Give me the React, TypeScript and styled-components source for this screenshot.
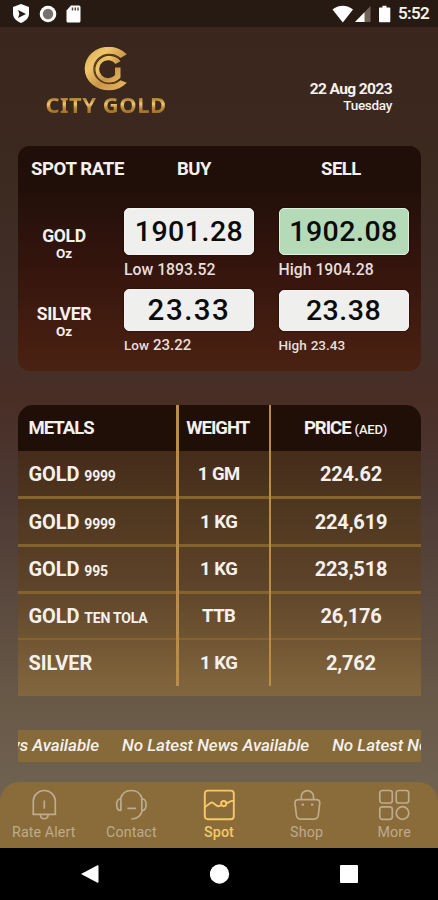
import React from "react";
import styled, { createGlobalStyle } from "styled-components";

const GlobalStyle = createGlobalStyle`
  *, *::before, *::after { box-sizing: border-box; }
  body { margin: 0; background: #3a261d; font-family: Roboto, "Liberation Sans", sans-serif; }
`;

const Screen = styled.main`
  width: 438px;
  height: 900px;
  overflow: hidden;
  display: flex;
  flex-direction: column;
  color: #f4f1ed;
  background: linear-gradient(180deg, #3a261d 0, #3b281e 150px, #43302a 330px, #492e26 400px, #4d3a34 500px, #5a493e 600px, #685947 700px, #706250 790px);
`;

const StatusBar = styled.header`
  flex: none;
  height: 27px;
  padding: 0 9px 0 12px;
  display: flex;
  align-items: center;
  justify-content: space-between;
  background: #271a13;
`;

const StatusGroup = styled.div<{ $gap: number }>`
  display: flex;
  align-items: center;
  gap: ${(p) => p.$gap}px;
`;

const Type = styled.span<{ $size: number; $weight?: number; $track?: number; $italic?: boolean }>`
  font-size: ${(p) => p.$size}px;
  font-weight: ${(p) => p.$weight ?? 700};
  letter-spacing: ${(p) => p.$track ?? 0}px;
  font-style: ${(p) => (p.$italic ? "italic" : "normal")};
  line-height: 1.17;
  white-space: pre;
`;

const BrandBar = styled.section`
  flex: none;
  height: 119px;
  padding: 20px 46px 0 45px;
  display: flex;
  justify-content: space-between;
`;

const Brand = styled.div`
  width: 122px;
  display: flex;
  flex-direction: column;
  align-items: center;
`;

const BrandName = styled.div`
  margin-top: -2px;
  font: 700 22px/26px "Noto Sans", sans-serif;
  letter-spacing: 0.5px;
  white-space: nowrap;
  color: transparent;
  background: linear-gradient(180deg, #9c6c26 5px, #c2913f 9px, #edc878 13px, #bd8a38 17px, #a06f26 22px);
  background-clip: text;
  -webkit-background-clip: text;
`;

const DateBlock = styled.div`
  padding-top: 33px;
  display: flex;
  flex-direction: column;
  align-items: flex-end;
`;

const SpotCard = styled.section`
  flex: none;
  height: 225px;
  margin: 0 17px 0 18px;
  border-radius: 12px;
  overflow: hidden;
  background: linear-gradient(180deg, #230f09 46px, #2a120c 75px, #35150d 125px, #421c10 180px, #4a2212 225px);
`;

const SpotHead = styled.div`
  height: 46px;
  padding: 1px 0 0 13px;
  display: grid;
  grid-template-columns: 146px 144px 1fr;
  align-items: center;
  background: #200f08;
`;

const SpotRow = styled.div`
  display: flex;
`;

const SpotLabel = styled.div<{ $top: number }>`
  flex: none;
  width: 92px;
  margin-right: 14px;
  padding-top: ${(p) => p.$top}px;
  display: flex;
  flex-direction: column;
  align-items: center;
`;

const Quote = styled.div<{ $top: number }>`
  flex: none;
  width: 130px;
  margin-right: 24.5px;
  padding-top: ${(p) => p.$top}px;
`;

const Tile = styled.div<{ $h: number; $up?: boolean }>`
  height: ${(p) => p.$h}px;
  display: flex;
  align-items: center;
  justify-content: center;
  border-radius: 5px;
  border: 1.5px solid ${(p) => (p.$up ? "#dcefdc" : "#f3f3f2")};
  background: ${(p) => (p.$up ? "#b5dab8" : "#efefee")};
  box-shadow: 0 0 2px #160503;
  color: #0b0b0b;
`;

const Range = styled.div`
  height: 30px;
  display: flex;
  align-items: center;
  gap: 4px;
  color: #e7dfda;
`;

const RateTable = styled.section`
  flex: none;
  position: relative;
  height: 291px;
  margin: 34px 17px 0 18px;
  border-radius: 15px 15px 0 0;
  overflow: hidden;
  background: linear-gradient(180deg, #452c1b 46px, #513820 110px, #5c4229 175px, #6d5231 225px, #7d613b 270px, #82663e 291px);
`;

const RateRow = styled.div<{ $height: number; $head?: boolean; $line?: number }>`
  height: ${(p) => p.$height}px;
  padding-top: ${(p) => (p.$head ? 1 : 2)}px;
  display: grid;
  grid-template-columns: 159.5px 92.5px 1fr;
  align-items: center;
  background: ${(p) => (p.$head ? "#200f07" : "transparent")};
  border-bottom: ${(p) => (p.$line ? `${p.$line}px solid #83642f` : "none")};
`;

const MetalCell = styled.div`
  padding-left: 10.5px;
  display: flex;
  align-items: baseline;
  gap: 5px;
`;

const WeightCell = styled.div<{ $shift: number }>`
  display: flex;
  justify-content: center;
  padding-right: ${(p) => p.$shift}px;
`;

const PriceCell = styled.div<{ $shift: number }>`
  display: flex;
  align-items: baseline;
  justify-content: center;
  gap: 4px;
  padding-left: ${(p) => p.$shift}px;
`;

const ColumnRule = styled.i<{ $x: number }>`
  position: absolute;
  left: ${(p) => p.$x}px;
  top: 0;
  height: 281px;
  width: 2.4px;
  background: #b98d48;
`;

const News = styled.section`
  flex: none;
  height: 32px;
  margin: 34px 17px 0 18px;
  overflow: hidden;
  display: flex;
  align-items: center;
  background: #866a3a;
`;

const NewsTrack = styled.div`
  display: flex;
  gap: 23px;
  margin-left: -106px;
`;

const TabBar = styled.nav`
  flex: none;
  height: 66px;
  margin-top: 20px;
  display: grid;
  grid-template-columns: repeat(5, 1fr);
  border-radius: 20px 20px 0 0;
  background: #8a6c3a;
`;

const Tab = styled.div<{ $active?: boolean }>`
  display: flex;
  flex-direction: column;
  align-items: center;
  padding-top: 6px;
  gap: 2px;
  color: ${(p) => (p.$active ? "#f5c868" : "#beaa8d")};
`;

const SystemBar = styled.footer`
  flex: 1;
  display: grid;
  grid-template-columns: 22px 20px 20px;
  column-gap: 109px;
  align-items: center;
  padding-left: 79px;
  background: #000;
`;

const GoldEmblem = () => (
  <svg width="46" height="46" viewBox="0 0 46 46" fill="none">
    <defs>
      <linearGradient id="gold" x1="0" y1="0" x2="1" y2="1">
        <stop offset="0" stopColor="#d9a94e" />
        <stop offset=".3" stopColor="#efc56c" />
        <stop offset=".6" stopColor="#c99546" />
        <stop offset="1" stopColor="#e8bb60" />
      </linearGradient>
    </defs>
    <path d="M43.800 7.300A24 21.800 0 1 0 43.800 35.800L37.500 33.200A15.500 15 0 1 1 37.500 11Z" fill="url(#gold)" />
    <path d="M37.500 14.200A14 13.500 0 1 0 37.500 30.500V20.500H32V28A9 9 0 1 1 32.500 17Z" fill="url(#gold)" />
    <path d="M36.500 11.600A15 14.500 0 1 0 36 32.800" stroke="#5a3b1c" strokeWidth="1.400" />
  </svg>
);

const ShieldIcon = () => (
  <svg width="18" height="20" viewBox="0 0 18 20">
    <path d="M9 0 17 3v6.500c0 4.300-3.300 7.700-8 9.500-4.700-1.800-8-5.200-8-9.500V3Z" fill="#fff" />
    <path d="m6 6 8 4-8 4 1.400-4Z" fill="#271a13" />
  </svg>
);

const RecordIcon = () => (
  <svg width="18" height="18" viewBox="0 0 18 18">
    <circle cx="9" cy="9" r="8.300" fill="#fff" />
    <circle cx="9" cy="9" r="5.200" fill="#77716d" />
  </svg>
);

const CardIcon = () => (
  <svg width="15" height="18" viewBox="0 0 15 18">
    <path d="M5 .5h8a1.500 1.500 0 0 1 1.500 1.500v14A1.500 1.500 0 0 1 13 17.500H2A1.500 1.500 0 0 1 .5 16V5.500Z" fill="#fff" />
    <path d="M6.500 2.500v3M9.300 2.500v3M12 2.500v3" stroke="#54483f" strokeWidth="1.500" />
  </svg>
);

const StatusIcons = () => (
  <svg width="60" height="18" viewBox="0 0 60 18">
    <path d="M1.500 4.500C7-.6 16.500-.6 22 4.500L11.800 17.500Z" fill="#fff" />
    <path d="M39.500 1v16H24Z" fill="#726257" />
    <path d="M33.500 7.200V17H24Z" fill="#fff" />
    <path d="M51.500.8h4v1.700h3q.8 0 .8.8v13q0 .9-.9.9h-9.500q-.9 0-.9-.9v-13q0-.8.8-.8h2.700Z" fill="#fff" />
  </svg>
);

const tabIcon = {
  width: 34,
  height: 34,
  viewBox: "0 0 34 34",
  fill: "none",
  stroke: "currentColor",
  strokeWidth: 1.7,
  strokeLinecap: "round" as const,
  strokeLinejoin: "round" as const,
};

const BellIcon = () => (
  <svg {...tabIcon}>
    <path d="M6 26.300h22.600M6.300 26V13.300a11 10.800 0 0 1 22 0V26M13.500 27c.2 5 7.400 5 7.600 0M17.300 13v7" />
  </svg>
);

const HeadsetIcon = () => (
  <svg {...tabIcon}>
    <path d="M6.700 10.500C8 5.500 12 2.500 17.300 2.500S26.600 5.500 28 10.500M28.200 22.500c-.7 4.500-4.500 8.300-10.200 8.500M14 20.300h7.300M6.900 11v11.300h-1C1.600 22 1.600 11.500 5.900 11ZM27.800 11v11.300h1c4.300-.3 4.300-10.800 0-11.300Z" />
  </svg>
);

const ChartIcon = () => (
  <svg {...tabIcon} strokeWidth={1.9}>
    <rect x="2.800" y="2.600" width="29" height="28.600" rx="3" />
    <path d="M3 19 8.500 15Q10 14 11.500 15.200L14.500 17.600Q16.500 19.200 19.500 17M24.300 14.800h2q2-2.300 5.300-1.800" />
    <circle cx="21.700" cy="15.600" r="2.600" />
  </svg>
);

const BagIcon = () => (
  <svg {...tabIcon}>
    <path d="M8.500 11.600h17.700q4 0 3.500 4L28.300 27.200q-.6 4-4.600 4H11q-4 0-4.600-4L5 15.600q-.5-4 3.500-4ZM11.300 11.200V8.700a6.100 6.100 0 0 1 12.200 0v2.500" />
    <path d="M12.500 16.700h.6M21.900 16.700h.6" strokeWidth="2.200" />
  </svg>
);

const GridIcon = () => (
  <svg {...tabIcon}>
    <rect x="2.800" y="2.500" width="12.500" height="12.500" rx="2.500" />
    <rect x="19.200" y="2.500" width="12.500" height="12.500" rx="2.500" />
    <rect x="2.800" y="18.800" width="12.500" height="12.500" rx="2.500" />
    <circle cx="25.500" cy="25" r="6.300" />
  </svg>
);

type Rate = { metal: string; note?: string; weight: string; price: string; height: number; line?: number };

const rates: Rate[] = [
  { metal: "GOLD", note: "9999", weight: "1 GM", price: "224.62", height: 48, line: 3 },
  { metal: "GOLD", note: "9999", weight: "1 KG", price: "224,619", height: 48, line: 3 },
  { metal: "GOLD", note: "995", weight: "1 KG", price: "223,518", height: 47, line: 3 },
  { metal: "GOLD", note: "TEN TOLA", weight: "TTB", price: "26,176", height: 46, line: 2 },
  { metal: "SILVER", weight: "1 KG", price: "2,762", height: 46 },
];

const tabs = [
  { label: "Rate Alert", Icon: BellIcon },
  { label: "Contact", Icon: HeadsetIcon },
  { label: "Spot", Icon: ChartIcon, active: true },
  { label: "Shop", Icon: BagIcon },
  { label: "More", Icon: GridIcon },
];

export default function App() {
  return (
    <Screen>
      <GlobalStyle />
      <StatusBar>
        <StatusGroup $gap={9}>
          <ShieldIcon />
          <RecordIcon />
          <CardIcon />
        </StatusGroup>
        <StatusGroup $gap={7}>
          <StatusIcons />
          <Type $size={17} $weight={600} $track={-0.7}>5:52</Type>
        </StatusGroup>
      </StatusBar>

      <BrandBar>
        <Brand>
          <GoldEmblem />
          <BrandName>CITY GOLD</BrandName>
        </Brand>
        <DateBlock>
          <Type $size={15.5} $track={-0.6}>22 Aug 2023</Type>
          <Type $size={13.5} $weight={500} $track={-0.3}>Tuesday</Type>
        </DateBlock>
      </BrandBar>

      <SpotCard>
        <SpotHead>
          <Type $size={18.5} $track={-0.35}>SPOT RATE</Type>
          <Type $size={18.5} $track={-0.5}>BUY</Type>
          <Type $size={18.5} $track={-0.5}>SELL</Type>
        </SpotHead>
        <SpotRow>
          <SpotLabel $top={34}>
            <Type $size={17.5} $track={-0.3}>GOLD</Type>
            <Type $size={13.5}>Oz</Type>
          </SpotLabel>
          <Quote $top={16}>
            <Tile $h={47}><Type $size={28.5} $weight={500} $track={0.5}>1901.28</Type></Tile>
            <Range><Type $size={15.8} $weight={500}>Low 1893.52</Type></Range>
          </Quote>
          <Quote $top={16}>
            <Tile $h={47} $up><Type $size={28.5} $weight={500} $track={0.5}>1902.08</Type></Tile>
            <Range><Type $size={15.8} $weight={500}>High 1904.28</Type></Range>
          </Quote>
        </SpotRow>
        <SpotRow>
          <SpotLabel $top={19}>
            <Type $size={17.5} $track={-0.3}>SILVER</Type>
            <Type $size={13.5}>Oz</Type>
          </SpotLabel>
          <Quote $top={4}>
            <Tile $h={42}><Type $size={29.5} $weight={500} $track={1.5}>23.33</Type></Tile>
            <Range><Type $size={13.5} $weight={500}>Low</Type><Type $size={15} $weight={500}>23.22</Type></Range>
          </Quote>
          <Quote $top={5}>
            <Tile $h={41}><Type $size={28.5} $weight={500} $track={0.5}>23.38</Type></Tile>
            <Range><Type $size={13.5} $weight={500}>High</Type><Type $size={13.5} $weight={500}>23.43</Type></Range>
          </Quote>
        </SpotRow>
      </SpotCard>

      <RateTable>
        <RateRow $head $height={46}>
          <MetalCell><Type $size={18.5} $track={-1}>METALS</Type></MetalCell>
          <WeightCell $shift={12}><Type $size={18.5} $track={-1}>WEIGHT</Type></WeightCell>
          <PriceCell $shift={0}>
            <Type $size={18.5} $track={-1}>PRICE</Type>
            <Type $size={13} $weight={500} $track={-0.2}>(AED)</Type>
          </PriceCell>
        </RateRow>
        {rates.map((r, i) => (
          <RateRow key={i} $height={r.height} $line={r.line}>
            <MetalCell>
              <Type $size={20} $track={-0.1}>{r.metal}</Type>
              {r.note && <Type $size={14} $track={-0.2}>{r.note}</Type>}
            </MetalCell>
            <WeightCell $shift={10}><Type $size={18.5} $track={-0.5}>{r.weight}</Type></WeightCell>
            <PriceCell $shift={11}><Type $size={20} $track={-0.2}>{r.price}</Type></PriceCell>
          </RateRow>
        ))}
        <ColumnRule $x={158.3} />
        <ColumnRule $x={250.8} />
      </RateTable>

      <News>
        <NewsTrack>
          {[0, 1, 2].map((n) => (
            <Type key={n} $size={17} $weight={500} $track={-0.04} $italic>No Latest News Available</Type>
          ))}
        </NewsTrack>
      </News>

      <TabBar>
        {tabs.map(({ label, Icon, active }) => (
          <Tab key={label} $active={active}>
            <Icon />
            <Type $size={14.3} $weight={active ? 500 : 400} $track={0.1}>{label}</Type>
          </Tab>
        ))}
      </TabBar>

      <SystemBar>
        <svg width="22" height="20" viewBox="0 0 22 20">
          <path d="M2 10 18.500 1.300q1-.4 1 .7v16q0 1.100-1 .7Z" fill="#fff" />
        </svg>
        <svg width="20" height="20" viewBox="0 0 20 20"><circle cx="9.500" cy="10" r="9.700" fill="#fff" /></svg>
        <svg width="20" height="20" viewBox="0 0 20 20"><rect x="1" y="1" width="18" height="18" rx="1" fill="#fff" /></svg>
      </SystemBar>
    </Screen>
  );
}
